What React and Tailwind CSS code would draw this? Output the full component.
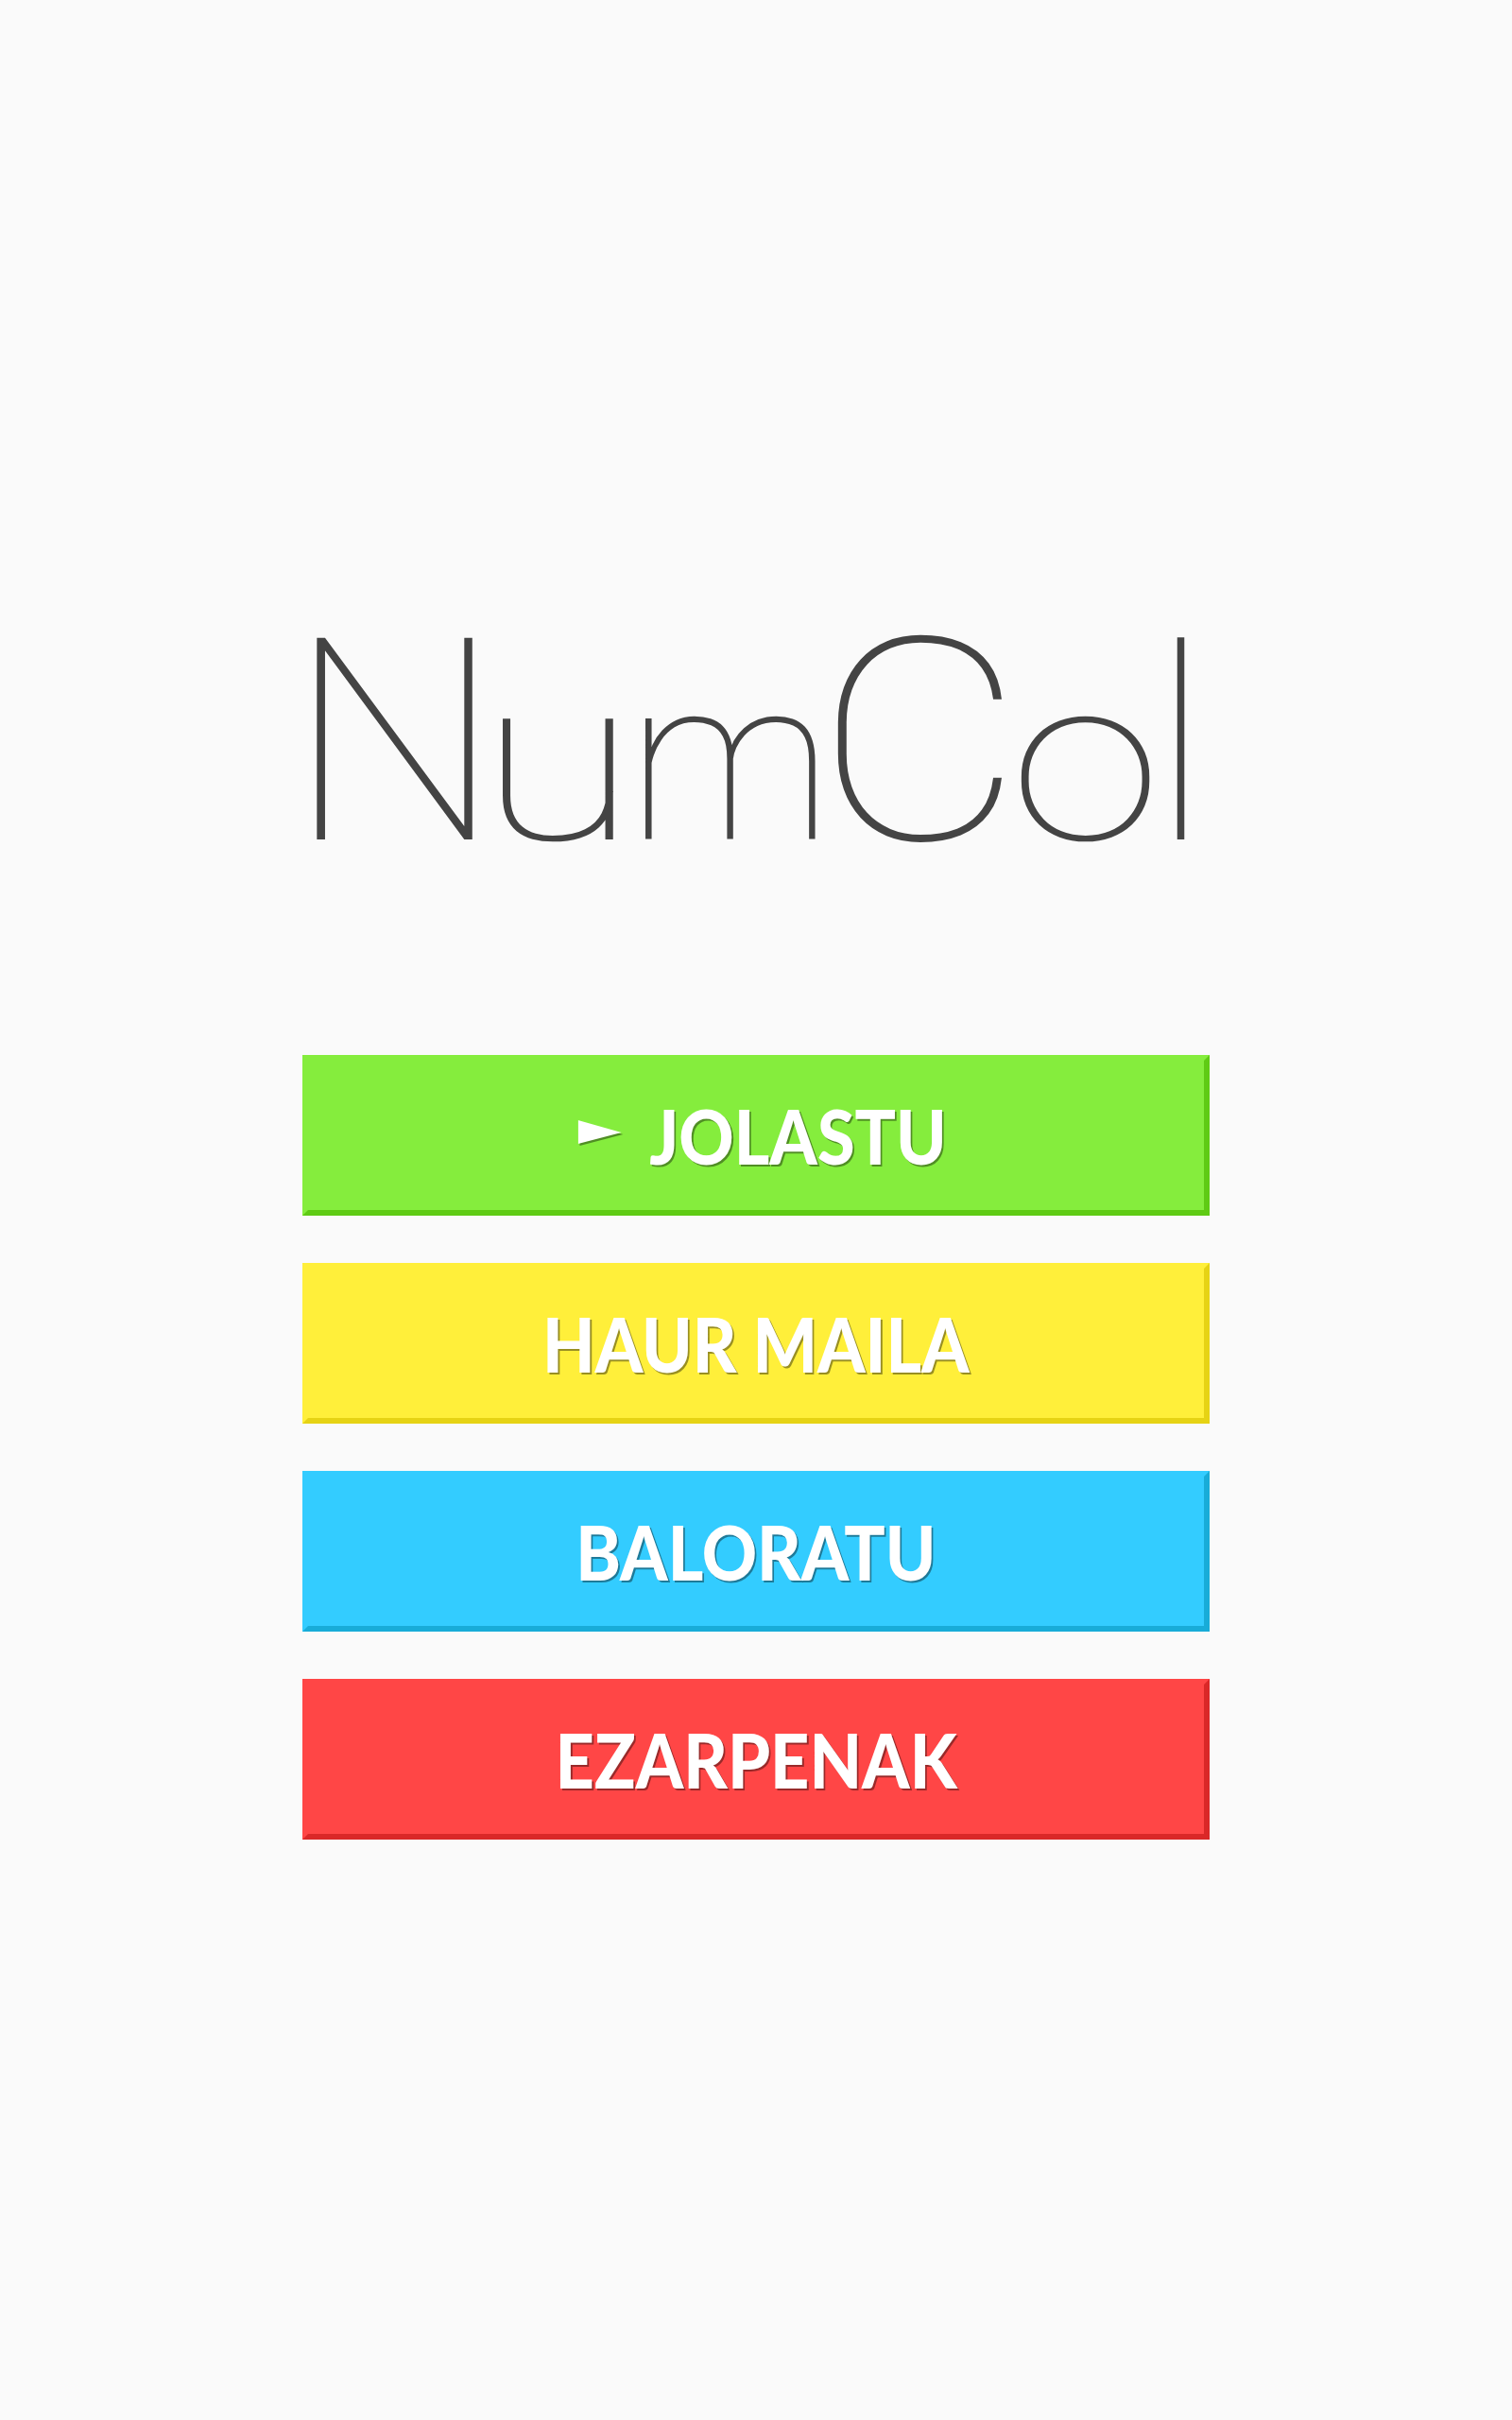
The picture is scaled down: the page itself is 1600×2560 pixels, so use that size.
const buttons = [
  { label: "JOLASTU", face: "bg-[#85ed3d] border-t-[#85ed3d] border-l-[#85ed3d]", dark: "border-r-[#5fcb14] border-b-[#5fcb14]", play: true },
  { label: "HAUR MAILA", face: "bg-[#ffef3a] border-t-[#ffef3a] border-l-[#ffef3a]", dark: "border-r-[#e6d314] border-b-[#e6d314]" },
  { label: "BALORATU", face: "bg-[#33ccff] border-t-[#33ccff] border-l-[#33ccff]", dark: "border-r-[#18acd8] border-b-[#18acd8]" },
  { label: "EZARPENAK", face: "bg-[#ff4646] border-t-[#ff4646] border-l-[#ff4646]", dark: "border-r-[#da2828] border-b-[#da2828]" },
];

function Play() {
  return (
    <svg width="54" height="30" viewBox="0 0 54 30" className="mr-[30px] mt-[-4px]">
      <polygon points="2,3 2,28 53,16" fill="rgba(0,0,0,0.4)" />
      <polygon points="0,1 0,26 51,14" fill="#ffffff" />
    </svg>
  );
}

const letter = "inline-block leading-none shrink-0 origin-left whitespace-nowrap";

export default function App() {
  return (
    <div className="w-[1600px] min-h-[2560px] bg-[#fafafa] flex flex-col items-center">
      <h1 className="mt-[636px] h-[300px] w-[1600px] flex items-baseline text-[#444444] font-thin [font-family:Roboto,sans-serif]">
        <span className={`${letter} ml-[304px] w-[190px] mr-[13px] text-[300px] tracking-[-24px] scale-x-[1.07]`}>N</span>
        <span className={`${letter} w-[123px] mr-[34px] text-[242px] tracking-[-10px] scale-x-[1.26]`}>u</span>
        <span className={`${letter} w-[199px] text-[242px] tracking-[-12px]`}>m</span>
        <span className={`${letter} w-[181px] mr-[24px] text-[300px] tracking-[-18px] scale-x-[1.13]`}>C</span>
        <span className={`${letter} w-[126px] mr-[26px] text-[242px] tracking-[-12px] scale-x-[1.21]`}>o</span>
        <span className={`${letter} w-[60px] text-[285px]`}>l</span>
      </h1>
      <div className="mt-[180px] w-[960px] flex flex-col gap-[50px]">
        {buttons.map((b) => (
          <div
            key={b.label}
            className={`h-[170px] border-[6px] ${b.face} ${b.dark} flex items-center justify-center`}
          >
            <div className={`flex items-center scale-x-[0.9] ${b.play ? "ml-[14px]" : ""}`}>
              {b.play && <Play />}
              <span className="text-white text-[80px] leading-none font-black [font-family:Lato,sans-serif] [text-shadow:2px_2px_0_rgba(0,0,0,0.4)]">
                {b.label}
              </span>
            </div>
          </div>
        ))}
      </div>
    </div>
  );
}
